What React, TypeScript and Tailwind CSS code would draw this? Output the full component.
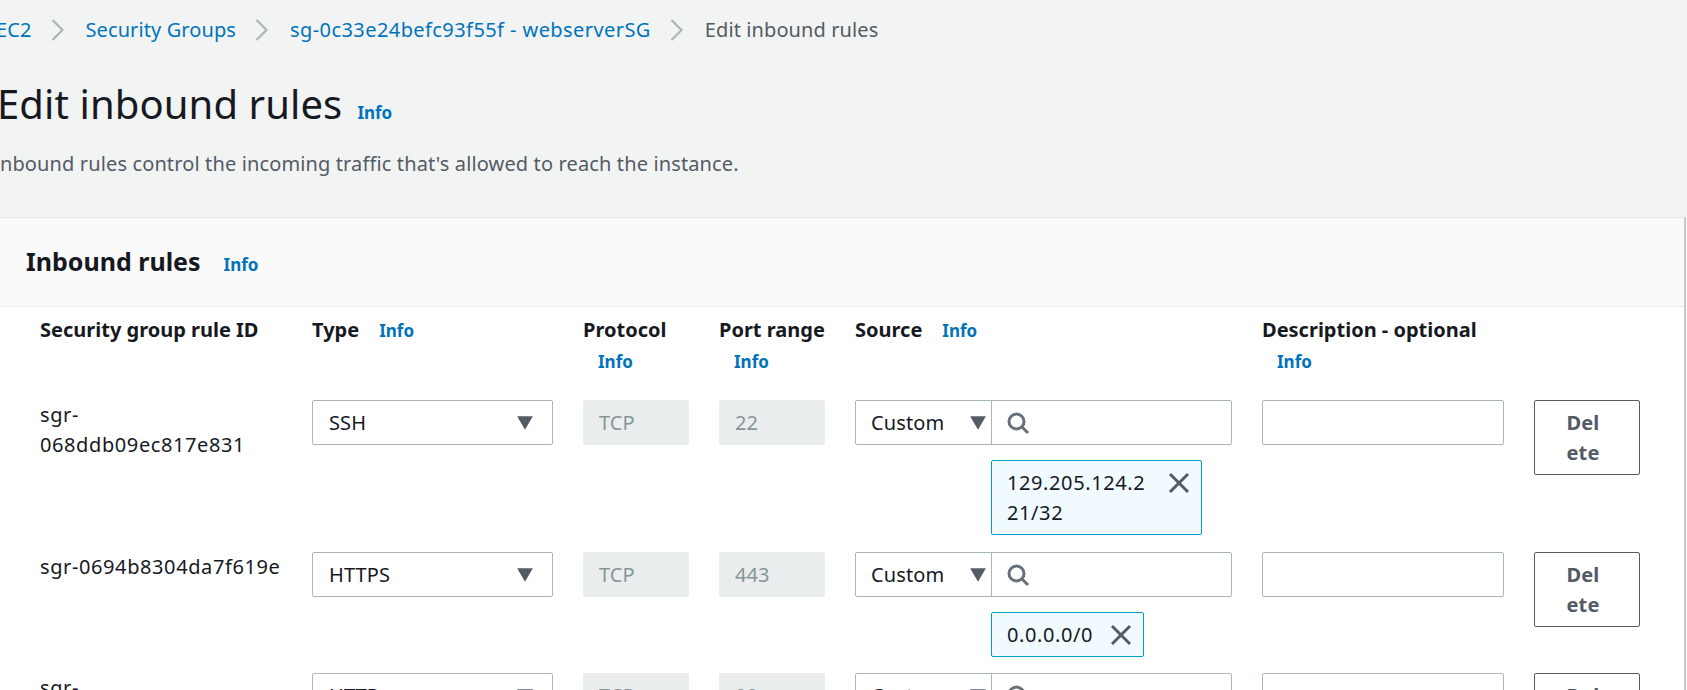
import React from 'react';

const font = { fontFamily: '"Noto Sans", sans-serif' };

const InfoLink = ({ className = '' }: { className?: string }) => (
  <a className={`text-[17px] font-bold leading-[24px] tracking-normal text-[#0073bb] ${className}`}>Info</a>
);

const Caret = () => (
  <svg viewBox="0 0 16 12" className="h-[14px] w-[18px] shrink-0 fill-[#545b64]">
    <path d="M1 0h14L8 12z" />
  </svg>
);

const Crumb = ({ children, className = '' }: { children: React.ReactNode; className?: string }) => (
  <>
    <a className={`text-[#0073bb] ${className}`}>{children}</a>
    <svg viewBox="0 0 14 24" className="ml-[18px] mr-[21px] h-[24px] w-[15px] fill-none stroke-[#aab7b8] stroke-[2.2]">
      <path d="M2 2l10 10L2 22" />
    </svg>
  </>
);

const Header = ({ label, info }: { label: string; info?: 'inline' | 'below' }) => (
  <div className="font-bold text-[#16191f]">
    <span>{label}</span>
    {info === 'inline' && <InfoLink className="ml-[20px]" />}
    {info === 'below' && (
      <div className="pl-[15px] pt-[1px]">
        <InfoLink />
      </div>
    )}
  </div>
);

interface Rule {
  id: string[];
  type: string;
  port: string;
  token?: string[];
  tokenWidth?: string;
  rowGap: string;
}

const rules: Rule[] = [
  { id: ['sgr-', '068ddb09ec817e831'], type: 'SSH', port: '22', token: ['129.205.124.2', '21/32'], tokenWidth: 'w-[211px]', rowGap: 'pb-[17px]' },
  { id: ['sgr-0694b8304da7f619e'], type: 'HTTPS', port: '443', token: ['0.0.0.0/0'], tokenWidth: 'w-[153px]', rowGap: 'pb-[16px]' },
  { id: ['sgr-'], type: 'HTTP', port: '80', rowGap: 'pb-[16px]' },
];

const RuleRow = ({ rule }: { rule: Rule }) => (
  <div className={`grid grid-cols-[242px_241px_106px_106px_377px_242px_106px] gap-x-[30px] leading-[30px] ${rule.rowGap}`}>
    <div className="tracking-[0.6px] text-[#16191f]">
      {rule.id.map((line) => (
        <div key={line}>{line}</div>
      ))}
    </div>
    <div className="flex h-[45px] items-center justify-between rounded-[2px] border border-[#aab7b8] bg-white pl-[16px] pr-[18px] text-[#16191f]">
      {rule.type}
      <Caret />
    </div>
    <div className="flex h-[45px] items-center rounded-[2px] bg-[#eaeded] pl-[16px] text-[#879596]">TCP</div>
    <div className="flex h-[45px] items-center rounded-[2px] bg-[#eaeded] pl-[16px] text-[#879596]">{rule.port}</div>
    <div>
      <div className="flex h-[45px] rounded-[2px] border border-[#aab7b8] bg-white">
        <div className="flex w-[136px] items-center justify-between border-r border-[#aab7b8] pl-[15px] pr-[4px] text-[#16191f]">
          Custom
          <Caret />
        </div>
        <div className="flex flex-1 items-center pl-[14px]">
          <svg viewBox="0 0 24 24" className="h-[24px] w-[24px] fill-none stroke-[#687078] stroke-[3]">
            <circle cx="10.5" cy="10.5" r="7.5" />
            <path d="M16 16l6 6" />
          </svg>
        </div>
      </div>
      {rule.token && (
        <div className={`ml-[136px] mt-[15px] flex items-start justify-between rounded-[2px] border border-[#00a1c9] bg-[#f1faff] pb-[6px] pl-[15px] pr-[10px] pt-[7px] tracking-[0.6px] text-[#16191f] ${rule.tokenWidth}`}>
          <div>
            {rule.token.map((line) => (
              <div key={line}>{line}</div>
            ))}
          </div>
          <svg viewBox="0 0 24 24" className="mt-[3px] h-[24px] w-[24px] shrink-0 fill-none stroke-[#545b64] stroke-[3]">
            <path d="M3 3l18 18M21 3L3 21" />
          </svg>
        </div>
      )}
    </div>
    <div className="h-[45px] rounded-[2px] border border-[#aab7b8] bg-white" />
    <div className="flex h-[75px] items-center justify-center rounded-[2px] border border-[#545b64] bg-white pr-[8px] font-bold text-[#545b64]">
      <div>
        <div>Del</div>
        <div>ete</div>
      </div>
    </div>
  </div>
);

export default function App() {
  return (
    <div className="h-[690px] overflow-hidden bg-[#f2f3f3] text-[20px] tracking-[0.1px]" style={font}>
      {/* Breadcrumbs, the page is scrolled a little to the right */}
      <div className="-ml-[4px] flex h-[60px] items-center whitespace-nowrap">
        <Crumb>EC2</Crumb>
        <Crumb>Security Groups</Crumb>
        <Crumb className="tracking-[0.42px]">sg-0c33e24befc93f55f - webserverSG</Crumb>
        <span className="text-[#545b64]">Edit inbound rules</span>
      </div>

      <div className="-ml-[3px] mt-[19px] flex items-baseline">
        <h1 className="text-[40px] leading-[50px] tracking-[0.1px] text-[#16191f]">Edit inbound rules</h1>
        <InfoLink className="ml-[15px]" />
      </div>
      <p className="-ml-[7px] mt-[20px] leading-[30px] tracking-[0.13px] text-[#545b64]">
        Inbound rules control the incoming traffic that's allowed to reach the instance.
      </p>

      {/* Panel */}
      <div className="mr-[1px] mt-[38px] border-r-2 border-t border-r-[#c6cdcd] border-t-[#e6e9e9] bg-white">
        <div className="flex h-[89px] items-center border-b border-[#eaeded] bg-[#fafafa] pl-[26px]">
          <h2 className="text-[25px] font-bold tracking-normal text-[#16191f]">Inbound rules</h2>
          <InfoLink className="ml-[23px] mt-[5px]" />
        </div>
        <div className="pl-[40px]">
          <div className="grid h-[93px] grid-cols-[242px_241px_106px_106px_377px_242px_106px] gap-x-[30px] pt-[8px] leading-[30px] tracking-normal">
            <Header label="Security group rule ID" />
            <Header label="Type" info="inline" />
            <Header label="Protocol" info="below" />
            <Header label="Port range" info="below" />
            <Header label="Source" info="inline" />
            <Header label="Description - optional" info="below" />
          </div>
          {rules.map((rule) => (
            <RuleRow key={rule.type} rule={rule} />
          ))}
        </div>
      </div>
    </div>
  );
}
